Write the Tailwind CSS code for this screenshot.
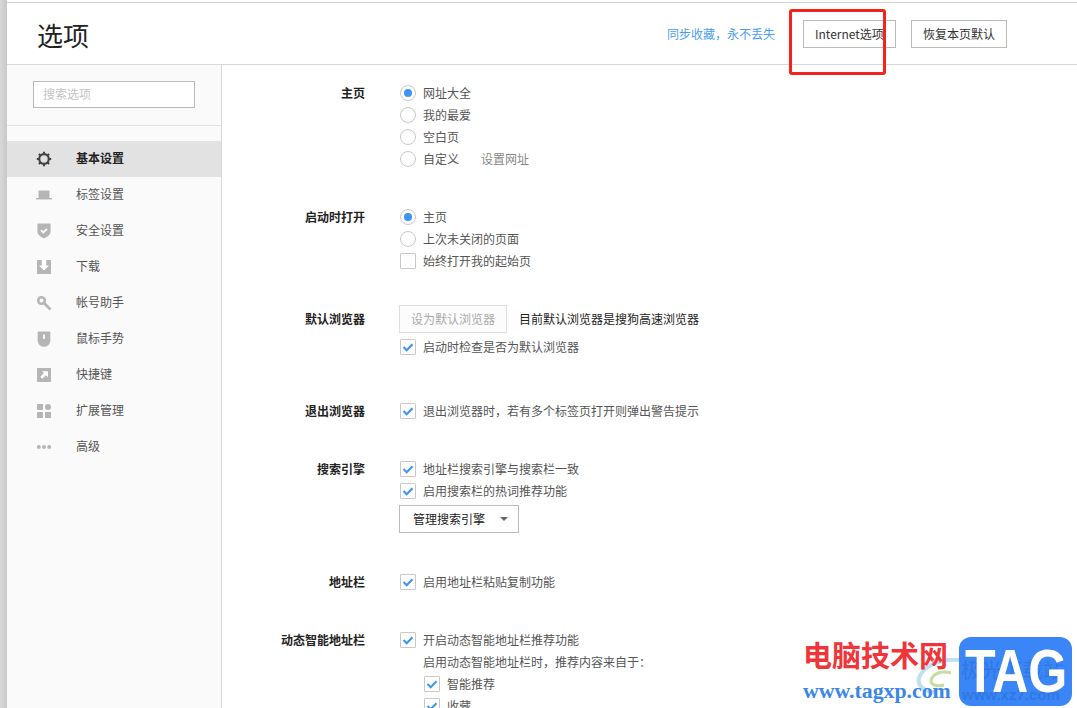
<!DOCTYPE html>
<html lang="zh-CN">
<head>
<meta charset="UTF-8">
<title>选项</title>
<script src="https://cdn.jsdelivr.net/npm/@tailwindcss/browser@4"></script>
</head>
<body class="relative h-[708px] w-[1077px] overflow-hidden bg-white font-['Noto_Sans_CJK_SC','Liberation_Sans',sans-serif] text-xs text-[#555]">
<div class="flex h-full">
  <!-- window edge -->
  <div class="w-[7px] shrink-0 bg-gradient-to-r from-[#d8d8d8] to-[#c8c8c8]"></div>

  <div class="flex min-w-0 flex-1 flex-col pt-[2px]">
    <!-- Header -->
    <header class="flex h-[63px] shrink-0 items-center border-y border-y-[#d2d2d2] border-b-[#d8d8d8] pl-[30px]">
      <h1 class="text-[26px] leading-none text-[#222] mt-[2px]">选项</h1>
      <a class="ml-auto mt-[1px] leading-[16px] text-[#4a9ef5]">同步收藏，永不丢失</a>
      <button class="ml-[28px] mt-[1px] h-[28px] w-[93px] border border-[#bbb] pl-[11px] text-left text-[#333]">Internet选项</button>
      <button class="ml-[15px] mr-[70px] mt-[1px] h-[28px] w-[96px] border border-[#bbb] text-[#333]">恢复本页默认</button>
    </header>

    <div class="flex min-h-0 flex-1">
      <!-- Sidebar -->
      <aside class="w-[215px] shrink-0 border-r border-[#d8d8d8] bg-[#fafafa]">
        <div class="h-[61px] border-b border-[#e2e2e2] px-[26px] pt-[16px]">
          <div class="flex h-[27px] w-[162px] items-center border border-[#b9b9b9] bg-white pb-[2px] pl-[9px] text-[#c4c4c4]">搜索选项</div>
        </div>
        <nav class="pt-[15px]">
          <div class="flex h-[36px] items-center gap-[24px] bg-[#e2e2e2] pl-[29px] font-bold text-[#222]">
            <svg class="size-4" viewBox="0 0 16 16"><circle cx="8" cy="8" r="4.8" fill="none" stroke="#444" stroke-width="2.2"/><path d="M7 0.8h2v2.6H7zM7 12.6h2v2.6H7zM0.8 7h2.6v2H0.8zM12.6 7h2.6v2h-2.6zM2.2 3.6l1.4-1.4 1.8 1.8L4 5.4zM10.6 12l1.4-1.4 1.8 1.8-1.4 1.400zM12.4 2.2l1.4 1.4L12 5.4 10.6 4zM4 10.6L5.4 12l-1.8 1.8-1.4-1.4z" fill="#444"/></svg>
            <span class="-mt-[2px]">基本设置</span>
          </div>
          <div class="flex h-[36px] items-center gap-[24px] pl-[29px]">
            <svg class="size-4" viewBox="0 0 16 16"><path d="M2.500 3.500h11v7.500h-11zM0 11h16v1.500H0z" fill="#b5b5b5"/></svg>
            <span class="-mt-[2px]">标签设置</span>
          </div>
          <div class="flex h-[36px] items-center gap-[24px] pl-[29px]">
            <svg class="size-4" viewBox="0 0 16 16"><path d="M2.300 0.500h11.400q.9 0 .9.900v7.400c0 3-3.600 5.200-6.600 6.700C5 14 1.400 11.800 1.400 8.800V1.400q0-.9.900-.9z" fill="#b5b5b5"/><path d="M5 7.200l2.300 2.200 3.700-3.400" fill="none" stroke="#fff" stroke-width="1.800"/></svg>
            <span class="-mt-[2px]">安全设置</span>
          </div>
          <div class="flex h-[36px] items-center gap-[24px] pl-[29px]">
            <svg class="size-4" viewBox="0 0 16 16"><path d="M1 1h14v14H1z" fill="#b5b5b5"/><path d="M5.800 1h4.400v5.500H13L8 11.500 3 6.500h2.800z" fill="#fff"/></svg>
            <span class="-mt-[2px]">下载</span>
          </div>
          <div class="flex h-[36px] items-center gap-[24px] pl-[29px]">
            <svg class="size-4" viewBox="0 0 16 16"><circle cx="5.500" cy="5.500" r="3.300" fill="none" stroke="#b5b5b5" stroke-width="2.600"/><path d="M8 8l6.500 6.500" stroke="#b5b5b5" stroke-width="2.600"/></svg>
            <span class="-mt-[2px]">帐号助手</span>
          </div>
          <div class="flex h-[36px] items-center gap-[24px] pl-[29px]">
            <svg class="size-4" viewBox="0 0 16 16"><path d="M2.500 0.500h11q.8 0 .8.800v8.200a6.300 6.300 0 0 1-12.600 0V1.300q0-.8.800-.8z" fill="#b5b5b5"/><rect x="7.100" y="3.500" width="1.800" height="4.500" fill="#fff"/></svg>
            <span class="-mt-[2px]">鼠标手势</span>
          </div>
          <div class="flex h-[36px] items-center gap-[24px] pl-[29px]">
            <svg class="size-4" viewBox="0 0 16 16"><path d="M1 1h14v14H1z" fill="#b5b5b5"/><path d="M6 4.200h6v6l-2-2-3.600 3.600-2.100-2.100L7.900 6.100z" fill="#fff"/></svg>
            <span class="-mt-[2px]">快捷键</span>
          </div>
          <div class="flex h-[36px] items-center gap-[24px] pl-[29px]">
            <svg class="size-4" viewBox="0 0 16 16"><path d="M1 1h6v6H1zM1 9h6v6H1zM9 9h6v6H9z" fill="#b5b5b5"/><circle cx="12" cy="4" r="3" fill="#b5b5b5"/></svg>
            <span class="-mt-[2px]">扩展管理</span>
          </div>
          <div class="flex h-[36px] items-center gap-[24px] pl-[29px]">
            <svg class="size-4" viewBox="0 0 16 16"><circle cx="2.800" cy="8" r="2" fill="#b5b5b5"/><circle cx="8" cy="8" r="2" fill="#b5b5b5"/><circle cx="13.200" cy="8" r="2" fill="#b5b5b5"/></svg>
            <span class="-mt-[2px]">高级</span>
          </div>
        </nav>
      </aside>

      <!-- Settings -->
      <main class="min-w-0 flex-1 overflow-hidden pt-[17px]">
        <section class="flex">
          <h2 class="w-[143px] text-right font-bold leading-[22px] text-[#222]">主页</h2>
          <div class="ml-[35px]">
            <label class="flex h-[22px] items-center gap-[7px]"><span class="flex size-4 items-center justify-center rounded-full border border-[#c8c8c8]"><span class="size-2 rounded-full bg-[#3a95f5]"></span></span>网址大全</label>
            <label class="flex h-[22px] items-center gap-[7px]"><span class="size-4 rounded-full border border-[#c8c8c8]"></span>我的最爱</label>
            <label class="flex h-[22px] items-center gap-[7px]"><span class="size-4 rounded-full border border-[#c8c8c8]"></span>空白页</label>
            <label class="flex h-[22px] items-center gap-[7px]"><span class="size-4 rounded-full border border-[#c8c8c8]"></span>自定义<a class="ml-[15px] text-[#888]">设置网址</a></label>
          </div>
        </section>

        <section class="mt-[36px] flex">
          <h2 class="w-[143px] text-right font-bold leading-[22px] text-[#222]">启动时打开</h2>
          <div class="ml-[35px]">
            <label class="flex h-[22px] items-center gap-[7px]"><span class="flex size-4 items-center justify-center rounded-full border border-[#c8c8c8]"><span class="size-2 rounded-full bg-[#3a95f5]"></span></span>主页</label>
            <label class="flex h-[22px] items-center gap-[7px]"><span class="size-4 rounded-full border border-[#c8c8c8]"></span>上次未关闭的页面</label>
            <label class="flex h-[22px] items-center gap-[7px]"><span class="size-4 rounded-[1px] border border-[#c8c8c8]"></span>始终打开我的起始页</label>
          </div>
        </section>

        <section class="mt-[33px] flex">
          <h2 class="w-[143px] text-right font-bold leading-[28px] text-[#222]">默认浏览器</h2>
          <div class="ml-[35px]">
            <div class="-ml-px flex h-[28px] items-center">
              <button class="h-[28px] w-[108px] border border-[#ddd] bg-[#fcfcfc] text-[#aaa]">设为默认浏览器</button>
              <span class="ml-[12px] text-[#222]">目前默认浏览器是搜狗高速浏览器</span>
            </div>
            <label class="mt-[3px] flex h-[22px] items-center gap-[7px]"><span class="size-4 rounded-[1px] border border-[#c8c8c8]"><svg viewBox="0 0 14 14" class="size-[14px]"><path d="M2.500 7l3.200 3.200 5.800-6" fill="none" stroke="#3a95f5" stroke-width="2"/></svg></span>启动时检查是否为默认浏览器</label>
          </div>
        </section>

        <section class="mt-[42px] flex">
          <h2 class="w-[143px] text-right font-bold leading-[22px] text-[#222]">退出浏览器</h2>
          <div class="ml-[35px]">
            <label class="flex h-[22px] items-center gap-[7px]"><span class="size-4 rounded-[1px] border border-[#c8c8c8]"><svg viewBox="0 0 14 14" class="size-[14px]"><path d="M2.500 7l3.200 3.200 5.800-6" fill="none" stroke="#3a95f5" stroke-width="2"/></svg></span>退出浏览器时，若有多个标签页打开则弹出警告提示</label>
          </div>
        </section>

        <section class="mt-[36px] flex">
          <h2 class="w-[143px] text-right font-bold leading-[22px] text-[#222]">搜索引擎</h2>
          <div class="ml-[35px]">
            <label class="flex h-[22px] items-center gap-[7px]"><span class="size-4 rounded-[1px] border border-[#c8c8c8]"><svg viewBox="0 0 14 14" class="size-[14px]"><path d="M2.500 7l3.200 3.200 5.800-6" fill="none" stroke="#3a95f5" stroke-width="2"/></svg></span>地址栏搜索引擎与搜索栏一致</label>
            <label class="flex h-[22px] items-center gap-[7px]"><span class="size-4 rounded-[1px] border border-[#c8c8c8]"><svg viewBox="0 0 14 14" class="size-[14px]"><path d="M2.500 7l3.200 3.200 5.800-6" fill="none" stroke="#3a95f5" stroke-width="2"/></svg></span>启用搜索栏的热词推荐功能</label>
            <button class="-ml-px mt-[3px] flex h-[28px] w-[120px] items-center border border-[#bbb] pl-[13px] text-[#222]">管理搜索引擎<span class="ml-[15px] border-x-[4px] border-t-[4px] border-x-transparent border-t-[#666]"></span></button>
          </div>
        </section>

        <section class="mt-[38px] flex">
          <h2 class="w-[143px] text-right font-bold leading-[22px] text-[#222]">地址栏</h2>
          <div class="ml-[35px]">
            <label class="flex h-[22px] items-center gap-[7px]"><span class="size-4 rounded-[1px] border border-[#c8c8c8]"><svg viewBox="0 0 14 14" class="size-[14px]"><path d="M2.500 7l3.200 3.200 5.800-6" fill="none" stroke="#3a95f5" stroke-width="2"/></svg></span>启用地址栏粘贴复制功能</label>
          </div>
        </section>

        <section class="mt-[36px] flex">
          <h2 class="w-[143px] text-right font-bold leading-[22px] text-[#222]">动态智能地址栏</h2>
          <div class="ml-[35px]">
            <label class="flex h-[22px] items-center gap-[7px]"><span class="size-4 rounded-[1px] border border-[#c8c8c8]"><svg viewBox="0 0 14 14" class="size-[14px]"><path d="M2.500 7l3.200 3.200 5.800-6" fill="none" stroke="#3a95f5" stroke-width="2"/></svg></span>开启动态智能地址栏推荐功能</label>
            <p class="ml-[23px] leading-[22px]">启用动态智能地址栏时，推荐内容来自于：</p>
            <label class="ml-[24px] flex h-[22px] items-center gap-[7px]"><span class="size-4 rounded-[1px] border border-[#c8c8c8]"><svg viewBox="0 0 14 14" class="size-[14px]"><path d="M2.500 7l3.200 3.200 5.800-6" fill="none" stroke="#3a95f5" stroke-width="2"/></svg></span>智能推荐</label>
            <label class="ml-[24px] flex h-[22px] items-center gap-[7px]"><span class="size-4 rounded-[1px] border border-[#c8c8c8]"><svg viewBox="0 0 14 14" class="size-[14px]"><path d="M2.500 7l3.200 3.200 5.800-6" fill="none" stroke="#3a95f5" stroke-width="2"/></svg></span>收藏</label>
          </div>
        </section>
      </main>
    </div>
  </div>
</div>

<!-- red annotation box -->
<div class="pointer-events-none absolute left-[789px] top-[9px] h-[66px] w-[97px] rounded-[3px] border-[3px] border-[#f5231c]"></div>

<!-- watermark -->
<svg class="pointer-events-none absolute left-[915px] top-[658px] h-[38px] w-[46px]" viewBox="0 0 46 38"><path d="M44 2C26 0 8 8 4 20c-2 8 6 14 16 14" fill="none" stroke="#bfe0ee" stroke-width="4"/><path d="M36 15c-10-3-19 1-20 8 0 4 6 6 13 4" fill="none" stroke="#c6dca0" stroke-width="3"/></svg>
<div class="pointer-events-none absolute left-[803px] top-[636px] w-[150px]">
  <div class="whitespace-nowrap text-[29px] font-bold leading-[36px] text-[#f0353a]">电脑技术网</div>
  <div class="mt-[7px] whitespace-nowrap font-['Liberation_Serif',serif] text-[21.800px] font-bold leading-[24px] text-[#3b86e8]">www.tagxp.com</div>
</div>
<div class="pointer-events-none absolute left-[959px] top-[637px] h-[69px] w-[113px] overflow-hidden rounded-[12px] bg-[#3b86f7]">
  <div class="absolute left-[2px] top-[19px] whitespace-nowrap text-[20.500px] leading-[26px] text-[#2f78e4]">极光下载站</div>
  <div class="absolute left-[3px] top-[50px] whitespace-nowrap font-['Liberation_Sans',sans-serif] text-[15px] font-bold leading-[16px] text-[#2f78e4]">www.xz7.com</div>
  <div class="absolute left-[6px] top-[1px] origin-left scale-x-[0.81] font-['Liberation_Sans',sans-serif] text-[62px] font-bold leading-[66px] text-white">TAG</div>
</div>
</body>
</html>
